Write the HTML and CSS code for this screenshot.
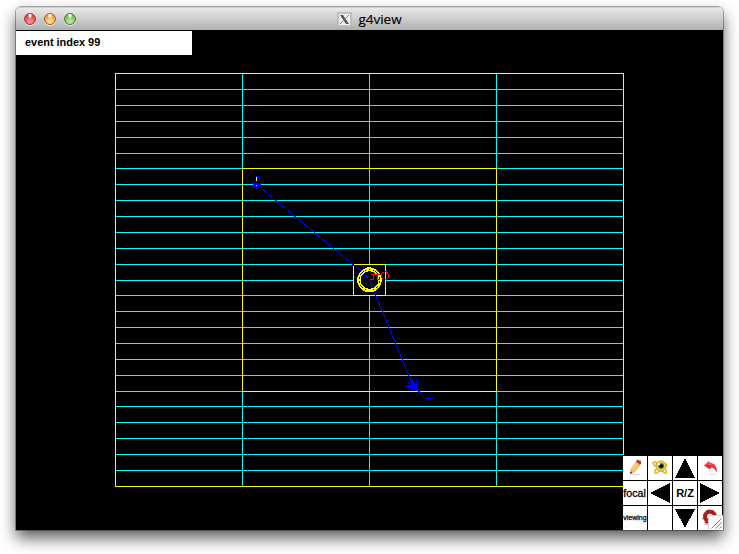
FILE: index.html
```
<!DOCTYPE html>
<html lang="en">
<head>
<meta charset="utf-8">
<title>g4view</title>
<link rel="stylesheet" href="styles.css">
</head>
<body>
<div class="window">
  <header class="titlebar">
    <div class="lights"><i class="light red"></i><i class="light amber"></i><i class="light green"></i></div>
    <div class="title">
      <svg width="15" height="15" viewBox="0 0 15 15"><rect x="1" y="1" width="13" height="13" fill="#efefef" stroke="#b5b5b5" stroke-width="1.5"/><path d="M3 3h3l6 9H9z" fill="#555"/><path d="M12 3 3 12" stroke="#888" stroke-width="1"/></svg>
      <span class="name">g4view</span>
    </div>
  </header>
  <main class="view">
    <svg class="scene" width="707" height="500" viewBox="16 30 707 500" shape-rendering="crispEdges" fill="none">
      <path stroke="#0ff" d="M115 89.5h508M115 105.5h508M115 121.5h508M115 137.5h508M115 153.5h508M115 168.5h508M115 184.5h508M115 200.5h508M115 216.5h508M115 232.5h508M115 248.5h508M115 264.5h508M115 280.5h508M115 295.5h508M115 311.5h508M115 327.5h508M115 343.5h508M115 359.5h508M115 375.5h508M115 391.5h508M115 406.5h508M115 422.5h508M115 438.5h508M115 454.5h508M115 470.5h508M242.5 73v413M369.5 73v413M496.5 73v413"/>
      <path stroke="#ff0" d="M115.5 73.5h508v413h-508zM242.5 168.5h254v223h-254z"/>
      <path fill="#000" stroke="#ff0" d="M353.5 264.5h32v31h-32z"/>
      <path stroke="#00f" d="M256.5 184.5 353 264.5 362 271.5 369.5 280.5 412.5 384.5 425.5 398.5H434M252 182.5h2M253 183.5h2M253 185.5h7M252 187.5h3M254 186.5h6M253 184.5h8M255 188.5h2M256.5 176v13M257 176.5h2M258 178.5h1M259 187.5h3M260 183.5h3M263.5 181v2"/>
      <path stroke="#00f" d="M405 386.5h12M409 383l7 6M408 390l8-8M412.5 380v11M409 383.5h6M407 385.5h10M410 384.5h6M408 387.5h8M410 388.5h7M415 382.5h2M416 380.5h3M418 381.5h1M405 387v1M408 382v2M410 381.5h1M416 384.5h2M408 389.5h1M415 390.5h3"/>
      <path stroke="#ff0" d="M256.5 177v4M256.5 185v1"/>
      <circle cx="369.5" cy="280" r="11.4" stroke="#ff0" stroke-width="1.7"/>
      <circle cx="369.5" cy="280" r="9.5" stroke="#ff0" stroke-width="1.4"/>
      <path stroke="#ff0" stroke-width="2" d="M367 268h4M367 291h4M358 278v4M380.5 278v4"/>
      <path fill="red" d="M371 274h9v1h-9zM373 275h1v5h-1zM377 275h1v5h-1zM370 279h3v1h-3zM378 279h2v1h-2zM382 272h2v1h-2zM381 273h1v5h-1zM382 278h1v1h-1zM385 271h2v1h-2zM386 272h2v2h-2zM388 274h1v4h-1zM387 278h1v1h-1zM385 279h2v1h-2z"/>
    </svg>
    <div class="event"><span class="stretch">event index 99</span></div>
    <div class="controls">
      <div class="cell"><svg viewBox="0 0 24 24"><ellipse cx="13" cy="18.5" rx="5" ry=".8" fill="#ddd"/><path fill="#f6c35a" stroke="#c99a50" stroke-width=".4" d="m7 18 1-5L13.5 5.500l4 2.500L12 15.500z"/><path fill="#b73a35" d="m13 6 1-2.500 4 1.500v3l-2 .5z"/><path stroke="#ffe6a0" d="m10 13 5-6"/><path fill="#333" d="m7 18 .5-2.500 2 1z"/></svg></div>
      <div class="cell"><svg viewBox="0 0 24 24" fill="none"><path stroke="#edb32a" stroke-width="1.6" d="M9 13c-2 0-3 2-1 3M16 13c2 0 3 2 2 4h1M9 7 7 6 5 7l1 2 3 2M17 8c2 0 2 2 0 3M6 17h3l2-2h4l1 2h3"/><circle cx="13" cy="10" r="5" fill="#f8d748" stroke="#d49b1d"/><circle cx="13.2" cy="10" r="3" fill="#388545"/><circle cx="13.2" cy="10" r="1.8" fill="#000"/><path fill="#fff" d="M10 7h2v2h-2z"/></svg></div>
      <div class="cell"><svg viewBox="0 0 24 24" shape-rendering="crispEdges"><path d="M12 2 22 22H2z"/></svg></div>
      <div class="cell"><svg viewBox="0 0 24 24"><ellipse cx="14" cy="18.5" rx="5" ry=".8" fill="#e5e5e5"/><path fill="#ed2631" d="m6 9.500 5-4.500 1 2c5 0 7 4 7 9.500-2-3-3-5-6-5l-1 2z"/><path stroke="#ff9292" stroke-width=".6" fill="none" d="m8 9 3-2.500v2c3 0 5 1 6 3"/></svg></div>
      <div class="cell focal"><span class="stretch">focal</span></div>
      <div class="cell"><svg viewBox="0 0 24 24" shape-rendering="crispEdges"><path d="M2 12 22 2v20z"/></svg></div>
      <div class="cell rz">R/Z</div>
      <div class="cell"><svg viewBox="0 0 24 24" shape-rendering="crispEdges"><path d="M22 12 2 2v20z"/></svg></div>
      <div class="cell viewing">viewing</div>
      <div class="cell"></div>
      <div class="cell"><svg viewBox="0 0 24 24" shape-rendering="crispEdges"><path d="M12 22 2 3h20z"/></svg></div>
      <div class="cell"><svg viewBox="0 0 24 24"><ellipse cx="10" cy="18.500" rx="4" ry=".8" fill="#ccc"/><path d="M11 15.500A5 5 0 1 1 17 11" fill="none" stroke="#b51d21" stroke-width="4"/><path d="M5 8l3 3M9 4l2 4M15 4l-2 4M4 13l4-1" stroke="#8e1116" stroke-width=".7"/><path fill="#b51d21" d="m6 17 6-5v6z"/></svg></div>
    </div>
    <svg class="grip" width="15" height="15" viewBox="0 0 15 15"><path fill="#fafafa" d="M0 0h15v15H0z"/><path stroke="#d5d5d5" fill="none" d="M.5 15V.5H15"/><path stroke="#777" stroke-width=".9" d="M3.500 13.500 13.500 3.500M7.500 13.500l6-6M11.500 13.500l2-2"/></svg>
  </main>
</div>
</body>
</html>
```
FILE: styles.css
```
* { box-sizing: border-box; }
body {
  margin: 0;
  width: 739px;
  height: 554px;
  padding: 7px 16px 0;
  overflow: hidden;
  background: #fff;
  font-family: "Liberation Sans", sans-serif;
  color: #000;
}
.window {
  width: 707px;
  height: 523px;
  border-radius: 5px 5px 0 0;
  box-shadow: 0 0 0 1px rgba(0,0,0,.3), 0 8px 16px rgba(0,0,0,.65);
}
.titlebar {
  height: 23px;
  display: grid;
  grid-template-columns: 1fr auto 1fr;
  align-items: center;
  border-radius: 4px 4px 0 0;
  background: linear-gradient(#ececec, #d7d7d7 35%, #b0b0b0);
  box-shadow: inset 0 1px #cfcfcf;
}
.lights { display: flex; gap: 8px; padding: 1px 0 0 8px; }
.light {
  width: 12px;
  height: 12px;
  border-radius: 50%;
  border: 1px solid;
  box-shadow: 0 1px #eee;
}
.red { border-color: #943b3b; background: radial-gradient(ellipse at 50% 12%, #fff 0 12%, transparent 30%), radial-gradient(circle at 50% 80%, #ff9a98, #e03f43 75%); }
.amber { border-color: #98672b; background: radial-gradient(ellipse at 50% 12%, #fff 0 12%, transparent 30%), radial-gradient(circle at 50% 80%, #ffe19a, #e99b39 75%); }
.green { border-color: #4e7b38; background: radial-gradient(ellipse at 50% 12%, #fff 0 12%, transparent 30%), radial-gradient(circle at 50% 80%, #c8efaa, #70b850 75%); }
.title { display: flex; align-items: center; gap: 6px; height: 23px; padding: 2px 0 0; }
.name { font: 13.5px/18px "Open Sans", sans-serif; padding-bottom: 2px; -webkit-text-stroke: .15px #000; }
.view { position: relative; height: 500px; background: #000; }
.scene { display: block; }
.stretch { display: inline-block; transform: scaleX(1.04); transform-origin: left; }
.event {
  position: absolute;
  left: 0;
  top: 1px;
  width: 176px;
  height: 24px;
  padding-left: 9px;
  background: #fff;
  font-size: 10.5px;
  font-weight: bold;
  line-height: 23px;
}
.controls {
  position: absolute;
  right: 0;
  bottom: 0;
  width: 100px;
  height: 75px;
  padding: 1px 1px 0 0;
  display: grid;
  grid-template: repeat(3, 24px) / repeat(4, 24px);
  gap: 1px;
  background: #000;
}
.cell {
  background: #fff;
  display: flex;
  align-items: center;
  justify-content: center;
  overflow: hidden;
  white-space: nowrap;
}
.cell svg { width: 24px; height: 24px; }
.focal { font-size: 10px; -webkit-text-stroke: .3px #000; }
.focal .stretch { transform: scaleX(1.06); transform-origin: center; }
.rz { font-size: 11px; font-weight: bold; }
.viewing { font-size: 7px; -webkit-text-stroke: .25px #000; padding-bottom: 1px; }
.grip { position: absolute; right: 0; bottom: 0; }
```
